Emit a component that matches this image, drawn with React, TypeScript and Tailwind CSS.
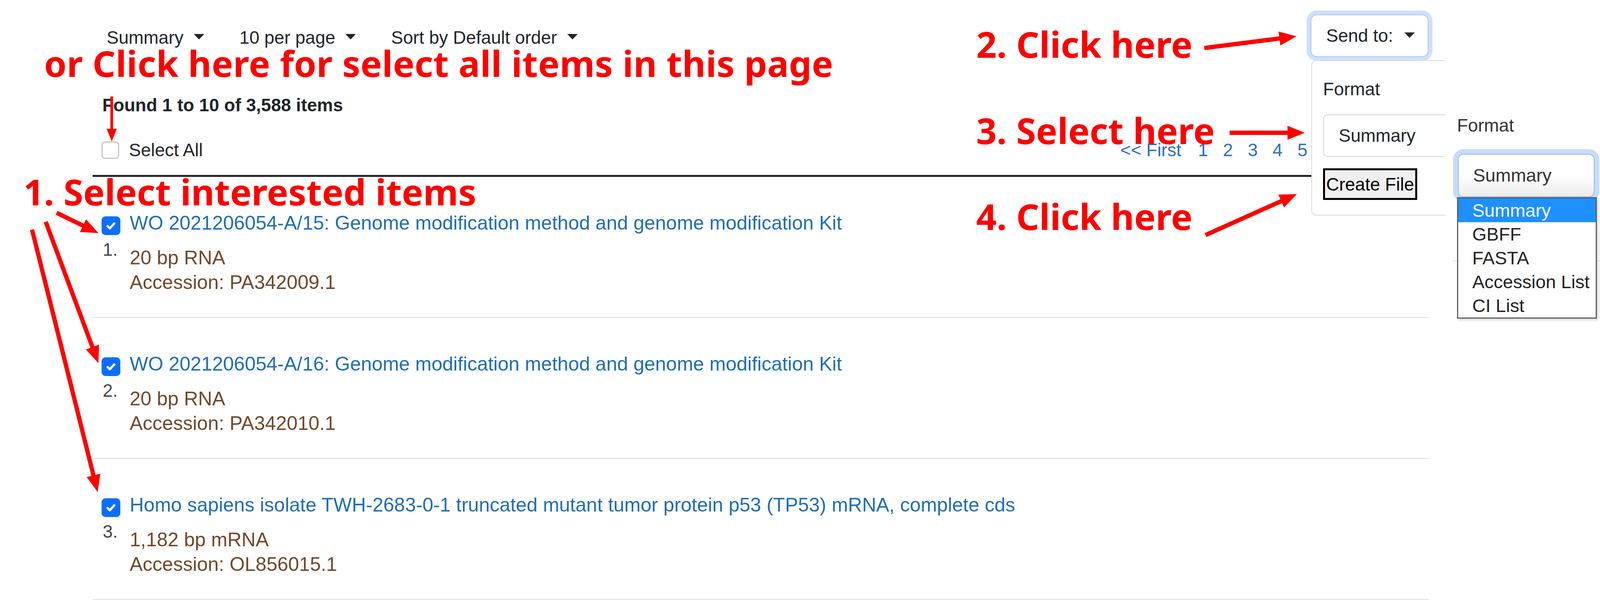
import React from "react";

// --- Data ---
const TOOLBAR = ["Summary", "10 per page", "Sort by Default order"];

const RESULTS = [
  {
    title: "WO 2021206054-A/15: Genome modification method and genome modification Kit",
    size: "20 bp RNA",
    accession: "Accession: PA342009.1",
  },
  {
    title: "WO 2021206054-A/16: Genome modification method and genome modification Kit",
    size: "20 bp RNA",
    accession: "Accession: PA342010.1",
  },
  {
    title:
      "Homo sapiens isolate TWH-2683-0-1 truncated mutant tumor protein p53 (TP53) mRNA, complete cds",
    size: "1,182 bp mRNA",
    accession: "Accession: OL856015.1",
  },
];

const FORMATS = ["Summary", "GBFF", "FASTA", "Accession List", "CI List"];

// red call-outs drawn over the screenshot (top = baseline - 71)
const NOTES = [
  { text: "or Click here for select all items in this page", left: 113, top: 127, wide: true },
  { text: "1. Select interested items", left: 60, top: 456, wide: false },
  { text: "2. Click here", left: 2499, top: 78, wide: false },
  { text: "3. Select here", left: 2499, top: 299, wide: false },
  { text: "4. Click here", left: 2499, top: 519, wide: false },
];

const ARROWS = [
  { x1: 286, y1: 247, x2: 286, y2: 362, w: 7, head: 32, hw: 26 },
  { x1: 3083, y1: 123, x2: 3319, y2: 93 },
  { x1: 3148, y1: 340, x2: 3340, y2: 340 },
  { x1: 3086, y1: 602, x2: 3320, y2: 497 },
  { x1: 145, y1: 545, x2: 252, y2: 597 },
  { x1: 117, y1: 568, x2: 252, y2: 930 },
  { x1: 82, y1: 588, x2: 250, y2: 1260 },
];

const Caret = () => (
  <svg width="27" height="14" viewBox="0 0 27 14" className="shrink-0 mb-[4px]">
    <polygon points="0,0 27,0 13.5,14" fill="#212529" />
  </svg>
);

const CheckedBox = () => (
  <span className="flex w-[48px] h-[48px] rounded-[10px] bg-[#0d6efd] items-center justify-center">
    <svg width="38" height="38" viewBox="0 0 20 20">
      <path
        d="M5.5 10.5l3 3 6-6.5"
        fill="none"
        stroke="#fff"
        strokeWidth="3"
        strokeLinecap="round"
        strokeLinejoin="round"
      />
    </svg>
  </span>
);

type ArrowProps = { x1: number; y1: number; x2: number; y2: number; w?: number; head?: number; hw?: number };

const Arrow = ({ x1, y1, x2, y2, w = 11, head = 44, hw = 36 }: ArrowProps) => {
  const len = Math.hypot(x2 - x1, y2 - y1);
  const ux = (x2 - x1) / len;
  const uy = (y2 - y1) / len;
  const bx = x2 - ux * head;
  const by = y2 - uy * head;
  const px = -uy * (hw / 2);
  const py = ux * (hw / 2);
  return (
    <g>
      <line x1={x1} y1={y1} x2={bx + ux * 2} y2={by + uy * 2} stroke="#ff0000" strokeWidth={w} />
      <polygon
        points={`${x2},${y2} ${bx + px},${by + py} ${bx - px},${by - py}`}
        fill="#ff0000"
      />
    </g>
  );
};

const SendToMenu = () => (
  <div className="absolute left-[2px] top-[117px] z-10 w-[520px] bg-white border-2 border-[#dadada] rounded-[12px] pl-[28px] pt-[44px] pb-[38px]">
    <div className="text-[46px] leading-[56px] text-[#212529]">Format</div>
    <div className="mt-[37px] h-[109px] w-[470px] border-2 border-[#d4d4d4] rounded-[12px] flex items-center pl-[38px] text-[46px] text-[#212529]">
      Summary
    </div>
    <button className="mt-[29px] h-[81px] border-[5px] border-black bg-[#efefef] px-[3px] text-[46px] leading-none text-black">
      Create File
    </button>
  </div>
);

const ResultRow = ({ item, index }: { item: (typeof RESULTS)[number]; index: number }) => (
  <div className="flex pl-[23px] pb-[57px] border-b-2 border-[#dddddd]">
    <div className="w-[72px] shrink-0 pt-[101px]">
      <CheckedBox />
      <div className="mt-[7px] pl-[3px] text-[46px] leading-[60px] text-[#444]">{index + 1}.</div>
    </div>
    <div className="pt-[88px]">
      <div className="text-[50px] leading-[60px] text-[#1f6db5] whitespace-nowrap">{item.title}</div>
      <div className="mt-[28px] text-[50px] leading-[63px] text-[#70482a]">
        <div>{item.size}</div>
        <div>{item.accession}</div>
      </div>
    </div>
  </div>
);

export default function App() {
  return (
    <div className="flex w-full max-w-[4232px] h-[1557px] bg-white overflow-hidden font-['Liberation_Sans',Arial,sans-serif]">
      {/* --- LEFT: results page --- */}
      <div className="relative w-[3700px] h-full shrink-0 overflow-hidden">
        <div className="ml-[237px] w-[3420px]">
          {/* toolbar */}
          <div className="mt-[37px] h-[109px] flex items-center justify-between">
            <div className="flex items-center gap-[90px] pl-[36px] pt-[9px] text-[46px] text-[#212529]">
              {TOOLBAR.map((label) => (
                <div key={label} className="flex items-center gap-[26px]">
                  <span>{label}</span>
                  <Caret />
                </div>
              ))}
            </div>
            <div className="relative">
              <button className="flex items-center gap-[29px] h-[109px] w-[302px] pl-[38px] bg-white border-2 border-[#a6c6f6] rounded-[16px] ring-[10px] ring-[#cfe0fc] text-[46px] text-[#212529]">
                Send to:
                <Caret />
              </button>
              <SendToMenu />
            </div>
          </div>

          <div className="mt-[95px] pl-[25px] text-[46px] leading-[56px] font-bold text-[#212529]">
            Found 1 to 10 of 3,588 items
          </div>

          <div className="mt-[65px] h-[45px] flex items-center">
            <label className="flex items-center gap-[25px] pl-[23px]">
              <span className="w-[45px] h-[45px] rounded-[9px] border-[3px] border-[#c4c4c4] bg-white" />
              <span className="text-[46px] leading-[45px] text-[#212529]">Select All</span>
            </label>
            <div className="ml-auto mr-[310px] flex items-center gap-[38px] text-[46px] leading-[45px] text-[#2a6fbd]">
              <span className="mr-[5px]">&lt;&lt; First</span>
              {[1, 2, 3, 4, 5].map((n) => (
                <span key={n}>{n}</span>
              ))}
            </div>
          </div>

          <div className="mt-[41px] h-[5px] bg-[#212529]" />

          {RESULTS.map((item, i) => (
            <ResultRow key={item.accession} item={item} index={i} />
          ))}
        </div>

        {/* --- annotation layer --- */}
        <svg className="absolute inset-0 z-20 pointer-events-none" width="3700" height="1557">
          {ARROWS.map((a, i) => (
            <Arrow key={i} {...a} />
          ))}
        </svg>
        {NOTES.map((n) => (
          <div
            key={n.text}
            className={`absolute z-20 font-['Noto_Sans',sans-serif] font-bold text-[92px] leading-[70px] text-[#ff0000] whitespace-nowrap ${
              n.wide ? "tracking-[0.4px]" : ""
            }`}
            style={{ left: n.left, top: n.top }}
          >
            {n.text}
          </div>
        ))}
      </div>

      {/* --- RIGHT: open format select --- */}
      <div className="flex-1 pl-[30px] pt-[293px]">
        <div className="text-[46px] leading-[56px] text-[#333]">Format</div>
        <div className="relative mt-[45px] ml-[2px] w-[350px] h-[111px] flex items-center pl-[37px] border-2 border-[#8fb8f5] rounded-[14px] ring-[12px] ring-[#c6dcfb] bg-gradient-to-b from-white via-white to-[#ececec] text-[47px] text-[#333]">
          Summary
          <div className="absolute left-[-4px] top-[calc(100%+2px)] z-10 w-[358px] border-[3px] border-[#5f5f5f] bg-white shadow-[4px_4px_6px_rgba(0,0,0,0.15)]">
            {FORMATS.map((f, i) => (
              <div
                key={f}
                className={`h-[61px] pl-[36px] text-[47px] leading-[61px] whitespace-nowrap ${
                  i === 0 ? "bg-[#1e90ff] text-white" : "text-[#222]"
                }`}
              >
                {f}
              </div>
            ))}
          </div>
        </div>
        <div className="mt-[162px] ml-[-13px] h-[2px] bg-[#e2e2e2]" />
      </div>
    </div>
  );
}
